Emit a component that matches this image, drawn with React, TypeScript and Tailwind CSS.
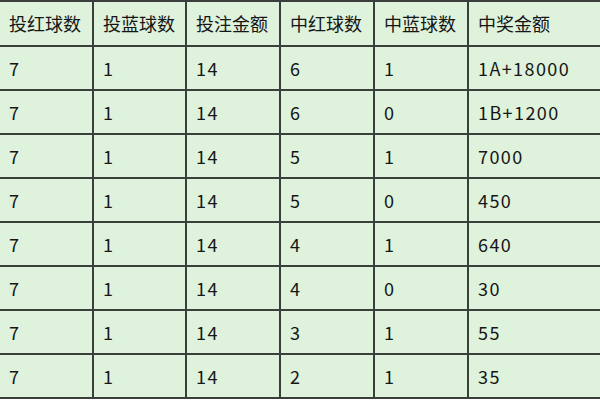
const headers = ['投红球数', '投蓝球数', '投注金额', '中红球数', '中蓝球数', '中奖金额'];

const rows = [
  ['7', '1', '14', '6', '1', '1A+18000'],
  ['7', '1', '14', '6', '0', '1B+1200'],
  ['7', '1', '14', '5', '1', '7000'],
  ['7', '1', '14', '5', '0', '450'],
  ['7', '1', '14', '4', '1', '640'],
  ['7', '1', '14', '4', '0', '30'],
  ['7', '1', '14', '3', '1', '55'],
  ['7', '1', '14', '2', '1', '35'],
];

export default function App() {
  return (
    <div
      className="w-[600px] h-[400px] overflow-hidden bg-white"
      style={{ fontFamily: '"Noto Sans CJK SC", "Noto Sans", sans-serif' }}
    >
      <div className="grid w-[760px] grid-cols-[92px_91px_92px_92px_92px_200px] grid-rows-[43px_repeat(8,42px)] gap-[2px] py-[2px] bg-[#3b3f3b] text-[18px] text-[#161616]">
        {/* Header */}
        {headers.map((h) => (
          <div key={h} className="flex items-center bg-[#def2dc] pl-[9px] whitespace-nowrap font-normal">
            {h}
          </div>
        ))}

        {/* Body */}
        {rows.map((row, r) =>
          row.map((cell, c) => (
            <div
              key={`${r}-${c}`}
              className="flex items-center bg-[#def2dc] pl-[9px] whitespace-nowrap tracking-[1.4px]"
            >
              {cell}
            </div>
          ))
        )}
      </div>
    </div>
  );
}
